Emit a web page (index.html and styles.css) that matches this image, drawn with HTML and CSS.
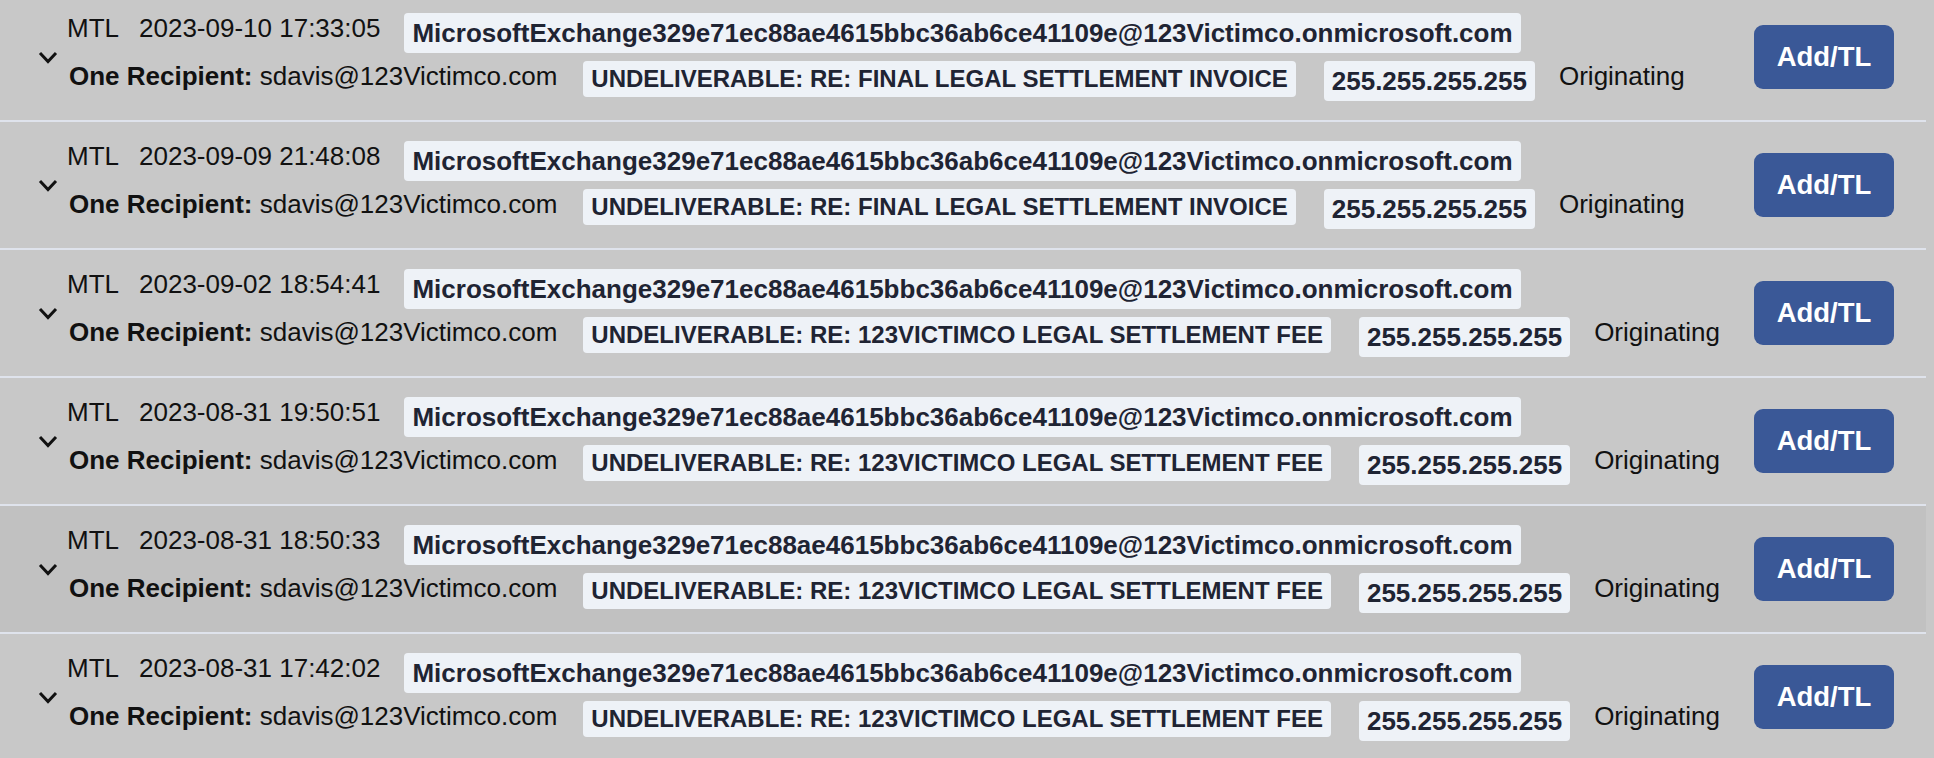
FILE: index.html
```html
<!DOCTYPE html>
<html lang="en">
<head>
<meta charset="utf-8">
<title>Messages</title>
<link rel="stylesheet" href="styles.css">
</head>
<body>
<div class="list">
  <div class="row">
    <span class="chev"><svg width="20" height="13" viewBox="0 0 20 13"><polyline points="2,2 10,10.5 18,2" fill="none" stroke="#111" stroke-width="3"/></svg></span>
    <div class="info">
      <div class="line1"><span class="loc">MTL</span><span class="date">2023-09-10 17:33:05</span><span class="tag tag-sender">MicrosoftExchange329e71ec88ae4615bbc36ab6ce41109e@123Victimco.onmicrosoft.com</span></div>
      <div class="line2"><span class="rcpt"><b>One Recipient:</b> sdavis@123Victimco.com</span><span class="tag tag-subj">UNDELIVERABLE: RE: FINAL LEGAL SETTLEMENT INVOICE</span><span class="tag tag-ip">255.255.255.255</span><span class="dir">Originating</span></div>
    </div>
    <button class="btn">Add/TL</button>
  </div>
  <div class="row">
    <span class="chev"><svg width="20" height="13" viewBox="0 0 20 13"><polyline points="2,2 10,10.5 18,2" fill="none" stroke="#111" stroke-width="3"/></svg></span>
    <div class="info">
      <div class="line1"><span class="loc">MTL</span><span class="date">2023-09-09 21:48:08</span><span class="tag tag-sender">MicrosoftExchange329e71ec88ae4615bbc36ab6ce41109e@123Victimco.onmicrosoft.com</span></div>
      <div class="line2"><span class="rcpt"><b>One Recipient:</b> sdavis@123Victimco.com</span><span class="tag tag-subj">UNDELIVERABLE: RE: FINAL LEGAL SETTLEMENT INVOICE</span><span class="tag tag-ip">255.255.255.255</span><span class="dir">Originating</span></div>
    </div>
    <button class="btn">Add/TL</button>
  </div>
  <div class="row">
    <span class="chev"><svg width="20" height="13" viewBox="0 0 20 13"><polyline points="2,2 10,10.5 18,2" fill="none" stroke="#111" stroke-width="3"/></svg></span>
    <div class="info">
      <div class="line1"><span class="loc">MTL</span><span class="date">2023-09-02 18:54:41</span><span class="tag tag-sender">MicrosoftExchange329e71ec88ae4615bbc36ab6ce41109e@123Victimco.onmicrosoft.com</span></div>
      <div class="line2"><span class="rcpt"><b>One Recipient:</b> sdavis@123Victimco.com</span><span class="tag tag-subj">UNDELIVERABLE: RE: 123VICTIMCO LEGAL SETTLEMENT FEE</span><span class="tag tag-ip">255.255.255.255</span><span class="dir">Originating</span></div>
    </div>
    <button class="btn">Add/TL</button>
  </div>
  <div class="row">
    <span class="chev"><svg width="20" height="13" viewBox="0 0 20 13"><polyline points="2,2 10,10.5 18,2" fill="none" stroke="#111" stroke-width="3"/></svg></span>
    <div class="info">
      <div class="line1"><span class="loc">MTL</span><span class="date">2023-08-31 19:50:51</span><span class="tag tag-sender">MicrosoftExchange329e71ec88ae4615bbc36ab6ce41109e@123Victimco.onmicrosoft.com</span></div>
      <div class="line2"><span class="rcpt"><b>One Recipient:</b> sdavis@123Victimco.com</span><span class="tag tag-subj">UNDELIVERABLE: RE: 123VICTIMCO LEGAL SETTLEMENT FEE</span><span class="tag tag-ip">255.255.255.255</span><span class="dir">Originating</span></div>
    </div>
    <button class="btn">Add/TL</button>
  </div>
  <div class="row row-hover">
    <span class="chev"><svg width="20" height="13" viewBox="0 0 20 13"><polyline points="2,2 10,10.5 18,2" fill="none" stroke="#111" stroke-width="3"/></svg></span>
    <div class="info">
      <div class="line1"><span class="loc">MTL</span><span class="date">2023-08-31 18:50:33</span><span class="tag tag-sender">MicrosoftExchange329e71ec88ae4615bbc36ab6ce41109e@123Victimco.onmicrosoft.com</span></div>
      <div class="line2"><span class="rcpt"><b>One Recipient:</b> sdavis@123Victimco.com</span><span class="tag tag-subj">UNDELIVERABLE: RE: 123VICTIMCO LEGAL SETTLEMENT FEE</span><span class="tag tag-ip">255.255.255.255</span><span class="dir">Originating</span></div>
    </div>
    <button class="btn">Add/TL</button>
  </div>
  <div class="row">
    <span class="chev"><svg width="20" height="13" viewBox="0 0 20 13"><polyline points="2,2 10,10.5 18,2" fill="none" stroke="#111" stroke-width="3"/></svg></span>
    <div class="info">
      <div class="line1"><span class="loc">MTL</span><span class="date">2023-08-31 17:42:02</span><span class="tag tag-sender">MicrosoftExchange329e71ec88ae4615bbc36ab6ce41109e@123Victimco.onmicrosoft.com</span></div>
      <div class="line2"><span class="rcpt"><b>One Recipient:</b> sdavis@123Victimco.com</span><span class="tag tag-subj">UNDELIVERABLE: RE: 123VICTIMCO LEGAL SETTLEMENT FEE</span><span class="tag tag-ip">255.255.255.255</span><span class="dir">Originating</span></div>
    </div>
    <button class="btn">Add/TL</button>
  </div>
</div>
</body>
</html>
```
FILE: styles.css
```css
html, body {
  margin: 0;
  padding: 0;
  overflow: hidden;
  background: #c8c8c8;
}
body {
  font-family: "Liberation Sans", Arial, sans-serif;
  font-size: 26px;
  color: #111;
}
.list {
  margin: -6px 8px 0 0;
}
.row {
  display: flex;
  align-items: center;
  height: 126px;
  border-bottom: 2px solid #dfe3ec;
  background: #c8c8c8;
  padding: 0 32px 0 38px;
}
.row-hover {
  background: #c1c1c1;
}
.chev {
  display: flex;
  width: 20px;
  height: 13px;
  margin-right: 9px;
}
.info {
  display: flex;
  flex-direction: column;
  gap: 8px;
}
.line1, .line2 {
  display: flex;
  align-items: flex-start;
  white-space: nowrap;
}
.line2 {
  padding-left: 2px;
}
.date {
  margin-left: 20px;
}
.tag {
  background: #eef2f7;
  color: #1f2433;
  font-weight: bold;
  border-radius: 4px;
  padding: 4.5px 8px;
}
.tag-sender {
  margin-left: 24px;
}
.tag-subj {
  font-size: 24px;
  padding: 4px 8px;
  margin-left: 26px;
}
.tag-ip {
  margin-left: 28px;
}
.dir {
  margin-left: 24px;
}
.rcpt b {
  font-weight: bold;
}
.btn {
  margin-left: auto;
  width: 140px;
  height: 64px;
  border: none;
  border-radius: 9px;
  background: #3a5897;
  color: #fff;
  font-family: "Liberation Sans", Arial, sans-serif;
  font-weight: bold;
  font-size: 27.5px;
  padding: 0;
}
```
